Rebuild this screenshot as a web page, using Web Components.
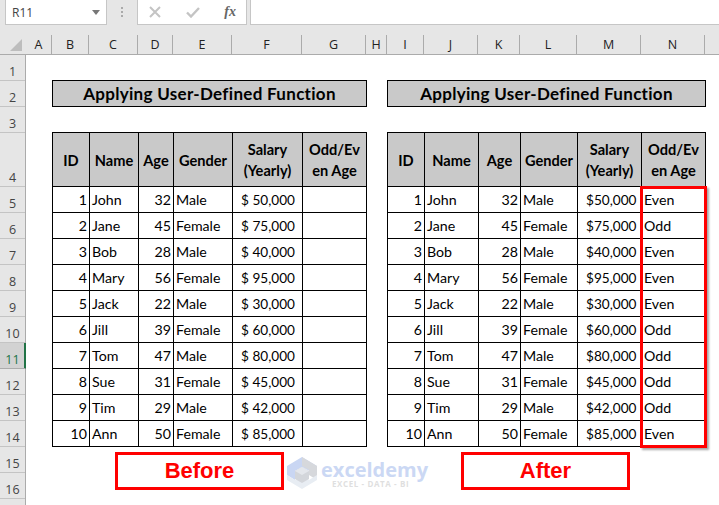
<!DOCTYPE html>
<html>
<head>
<meta charset="utf-8">
<title>Applying User-Defined Function</title>
<style>
	html, body { margin: 0; height: 505px; overflow: hidden; background: #fff; }
</style>
</head>
<body>
<excel-sheet></excel-sheet>
<script>
const people = [
	[1, "John", 32, "Male", "50,000", "Even"],
	[2, "Jane", 45, "Female", "75,000", "Odd"],
	[3, "Bob", 28, "Male", "40,000", "Even"],
	[4, "Mary", 56, "Female", "95,000", "Even"],
	[5, "Jack", 22, "Male", "30,000", "Even"],
	[6, "Jill", 39, "Female", "60,000", "Odd"],
	[7, "Tom", 47, "Male", "80,000", "Odd"],
	[8, "Sue", 31, "Female", "45,000", "Odd"],
	[9, "Tim", 29, "Male", "42,000", "Odd"],
	[10, "Ann", 50, "Female", "85,000", "Even"],
]

class FormulaBar extends HTMLElement {
	connectedCallback() {
		this.attachShadow({ mode: "open" }).innerHTML = `
		<style>
			:host {
				display: flex;
				height: 25px;
				box-sizing: border-box;
				background: #e6e6e6;
				padding-left: 5px;
				font-family: "Open Sans", sans-serif;
			}
			.box {
				box-sizing: border-box;
				height: 25px;
				background: #fff;
				border: 1px solid #c6c6c6;
				border-top: none;
				display: flex;
				align-items: center;
			}
			.name {
				width: 102px;
				padding: 0 6px;
				justify-content: space-between;
				font-size: 12px;
				color: #444;
			}
			.dots {
				width: 30px;
				display: flex;
				justify-content: center;
				padding-top: 7px;
			}
			.fn {
				width: 110px;
				position: relative;
				justify-content: space-between;
				padding: 0 10px 0 11px;
				font: italic bold 14px "Liberation Serif", serif;
				color: #666;
			}
			.input {
				flex: 1;
				margin-left: 3px;
				border-right: none;
			}
		</style>
		<div class="box name">
			<span>R11</span>
			<svg width="8" height="5" viewBox="0 0 8 5"><path d="M0 0H8L4 5Z" fill="#777"/></svg>
		</div>
		<div class="dots">
			<svg width="3" height="10" viewBox="0 0 3 10" fill="#aaa"><rect x="0" y="0" width="2" height="2"/><rect x="0" y="4" width="2" height="2"/><rect x="0" y="8" width="2" height="2"/></svg>
		</div>
		<div class="box fn">
			<svg width="12" height="12" viewBox="0 0 12 12"><path d="M1 1L11 11M11 1L1 11" stroke="#c4c4c4" stroke-width="2" fill="none"/></svg>
			<svg width="14" height="12" viewBox="0 0 14 12" style="margin-left:1px"><path d="M1 6.5L5 10.5L13 2" stroke="#c4c4c4" stroke-width="2.4" fill="none"/></svg>
			<span>fx</span>
		</div>
		<div class="box input"></div>
		`
	}
}
customElements.define("formula-bar", FormulaBar)

class ColumnHeaders extends HTMLElement {
	connectedCallback() {
		const cols = [["A",26],["B",37],["C",49],["D",35],["E",59],["F",70],["G",64],["H",21],["I",37],["J",54],["K",42],["L",57],["M",64],["N",64],["",14]]
		this.attachShadow({ mode: "open" }).innerHTML = `
		<style>
			:host {
				display: flex;
				height: 30px;
				box-sizing: border-box;
				background: #e6e6e6;
				border-bottom: 1px solid #ababab;
				padding-top: 10px;
				font: 12.5px "Open Sans", sans-serif;
				color: #222;
			}
			.corner {
				width: 26px;
				flex: none;
				box-sizing: border-box;
				position: relative;
			}
			svg { position: absolute; left: 10px; top: 4px; }
			.col {
				box-sizing: border-box;
				border-right: 1px solid #ababab;
				display: flex;
				align-items: center;
				justify-content: center;
				flex: none;
			}
			.col:last-child { border-right: none; }
		</style>
		<div class="corner"><svg width="12" height="12" viewBox="0 0 12 12"><path d="M12 0V12H0Z" fill="#bdbdbd"/></svg></div>
		${cols.map(c => `<div class="col" style="width:${c[1]}px">${c[0]}</div>`).join("")}
		`
	}
}
customElements.define("column-headers", ColumnHeaders)

class RowHeaders extends HTMLElement {
	connectedCallback() {
		let rows = ""
		for (let i = 1; i <= 17; i++) {
			const h = i == 4 ? 54 : 26
			// row 17 starts just above the window edge, its number would be cut
			rows += `<div class="row${i == 11 ? " sel" : ""}" style="height:${h}px">${i < 17 ? i : ""}</div>`
		}
		this.attachShadow({ mode: "open" }).innerHTML = `
		<style>
			:host {
				display: block;
				width: 26px;
				flex: none;
				box-sizing: border-box;
				background: #e6e6e6;
				border-right: 1px solid #ababab;
				font: 12.5px "Open Sans", sans-serif;
				color: #444;
			}
			.row {
				box-sizing: border-box;
				border-bottom: 1px solid #c4c4c4;
				display: flex;
				align-items: flex-end;
				justify-content: center;
				padding-bottom: 1px;
				line-height: 14px;
			}
			.sel {
				background: #d2d2d2;
				color: #217346;
				box-shadow: inset -1px 0 0 #217346;
				border-bottom-color: #ababab;
				margin-right: -1px;
				border-right: 1px solid #217346;
			}
		</style>
		${rows}
		`
	}
}
customElements.define("row-headers", RowHeaders)

class SheetTitle extends HTMLElement {
	connectedCallback() {
		this.attachShadow({ mode: "open" }).innerHTML = `
		<style>
			:host {
				display: flex;
				align-items: center;
				justify-content: center;
				box-sizing: border-box;
				height: 27px;
				align-self: start;
				margin-right: -1px;
				background: #c9c9c9;
				border: 1px solid #000;
				font: bold 17px Lato, sans-serif;
				letter-spacing: 0.3px;
				color: #000;
			}
		</style>
		<slot></slot>
		`
	}
}
customElements.define("sheet-title", SheetTitle)

class DataTable extends HTMLElement {
	connectedCallback() {
		const filled = this.hasAttribute("filled")
		const heads = ["ID", "Name", "Age", "Gender", "Salary<br>(Yearly)", "Odd/Ev<br>en Age"]
		const head = heads.map((h, i) => `<div class="c h${i < 4 ? " one" : ""}">${h}</div>`).join("")
		const body = people.map(p => `
			<div class="c r">${p[0]}</div>
			<div class="c">${p[1]}</div>
			<div class="c r">${p[2]}</div>
			<div class="c">${p[3]}</div>
			<div class="c m"><span>$</span><span>${p[4]}</span></div>
			<div class="c">${filled ? p[5] : ""}</div>
		`).join("")
		this.attachShadow({ mode: "open" }).innerHTML = `
		<style>
			:host {
				display: grid;
				grid-template-columns: var(--cols);
				grid-template-rows: 54px repeat(10, 26px);
				align-self: start;
				box-sizing: content-box;
				margin-right: -1px;
				border-right: 1px solid #000;
				border-bottom: 1px solid #000;
				font: 14.2px Lato, sans-serif;
				color: #000;
			}
			.c {
				box-sizing: border-box;
				border-left: 1px solid #000;
				border-top: 1px solid #000;
				padding: 0 2px;
				display: flex;
				align-items: center;
				white-space: nowrap;
				min-width: 0;
			}
			.r { justify-content: flex-end; }
			.m { justify-content: space-between; padding: 1px 7px 0 8px; font-size: 13.6px; }
			.h {
				display: block;
				background: #c9c9c9;
				font-weight: bold;
				font-size: 14.6px;
				line-height: 21px;
				padding: 6px 0 0;
				text-align: center;
				overflow: hidden;
			}
			.one { padding-top: 17px; }
		</style>
		${head}${body}
		`
	}
}
customElements.define("data-table", DataTable)

class CalloutLabel extends HTMLElement {
	connectedCallback() {
		this.attachShadow({ mode: "open" }).innerHTML = `
		<style>
			:host {
				display: flex;
				align-items: center;
				justify-content: center;
				box-sizing: border-box;
				width: 169px;
				height: 38px;
				margin-top: 5px;
				margin-left: var(--shift);
				border: 3px solid #ff0000;
				background: #fff;
				font: bold 22px "Liberation Sans", sans-serif;
				color: #ff0000;
			}
		</style>
		<slot></slot>
		`
	}
}
customElements.define("callout-label", CalloutLabel)

class SiteMark extends HTMLElement {
	connectedCallback() {
		this.attachShadow({ mode: "open" }).innerHTML = `
		<style>
			:host {
				position: absolute;
				left: 261px;
				top: 402px;
				display: flex;
				gap: 3px;
				pointer-events: none;
			}
			.words { display: flex; flex-direction: column; align-items: flex-start; margin-top: 4px; }
			.big {
				font: bold 20px/18px "Open Sans", sans-serif;
				color: #cbd8f4;
			}
			.small {
				font: bold 8px/10px "Open Sans", sans-serif;
				color: #dfdfdf;
				letter-spacing: 0.6px;
				margin-left: 11px;
				white-space: nowrap;
			}
		</style>
		<svg width="31" height="32" viewBox="0 0 31 32">
			<path d="M15 0L30 9V18L15 10L8 14V23L0 18V9Z" fill="#c9d6f3"/>
			<path d="M15 0L30 9V23L22 18V13L15 9Z" fill="#d6d8dc"/>
			<path d="M0 18L8 23L15 19L22 23L30 18V23L15 32L0 23Z" fill="#e8edf3"/>
			<path d="M15 10L22 14V22L15 26L8 22V14Z" fill="#d3d6db"/>
			<path d="M15 10L22 14L15 18L8 14Z" fill="#e4e7ec"/>
		</svg>
		<div class="words">
			<div class="big">exceldemy</div>
			<div class="small">EXCEL - DATA - BI</div>
		</div>
		`
	}
}
customElements.define("site-mark", SiteMark)

class ExcelSheet extends HTMLElement {
	connectedCallback() {
		this.attachShadow({ mode: "open" }).innerHTML = `
		<style>
			:host {
				display: flex;
				flex-direction: column;
				width: 719px;
				height: 505px;
				overflow: hidden;
				background: #fff;
			}
			.body { display: flex; flex: 1; min-height: 0; }
			.work {
				flex: 1;
				position: relative;
				display: grid;
				grid-template-columns: 26px 37px 49px 35px 59px 70px 64px 21px 37px 54px 42px 57px 64px 64px 14px;
				grid-template-rows: 25px 26px 26px auto auto;
				align-content: start;
			}
			.left { grid-column: 2 / 8; }
			.right { grid-column: 9 / 15; }
			.t { grid-row: 2; }
			.d { grid-row: 4; }
			.l { grid-row: 5; }
			data-table.left { --cols: 37px 49px 35px 59px 70px 64px; }
			data-table.right { --cols: 37px 54px 42px 57px 64px 64px; }
			.mark {
				position: absolute;
				left: 614px;
				top: 131px;
				width: 67px;
				height: 262px;
				box-sizing: border-box;
				border: 3px solid #ff0000;
				box-shadow: 2px 2px 2px rgba(0, 0, 0, 0.35);
			}
		</style>
		<formula-bar></formula-bar>
		<column-headers></column-headers>
		<div class="body">
			<row-headers></row-headers>
			<div class="work">
				<sheet-title class="left t">Applying User-Defined Function</sheet-title>
				<sheet-title class="right t">Applying User-Defined Function</sheet-title>
				<data-table class="left d"></data-table>
				<data-table class="right d" filled></data-table>
				<callout-label class="left l" style="--shift:63px">Before</callout-label>
				<callout-label class="right l" style="--shift:74px">After</callout-label>
				<div class="mark"></div>
				<site-mark></site-mark>
			</div>
		</div>
		`
	}
}
customElements.define("excel-sheet", ExcelSheet)
</script>
</body>
</html>
